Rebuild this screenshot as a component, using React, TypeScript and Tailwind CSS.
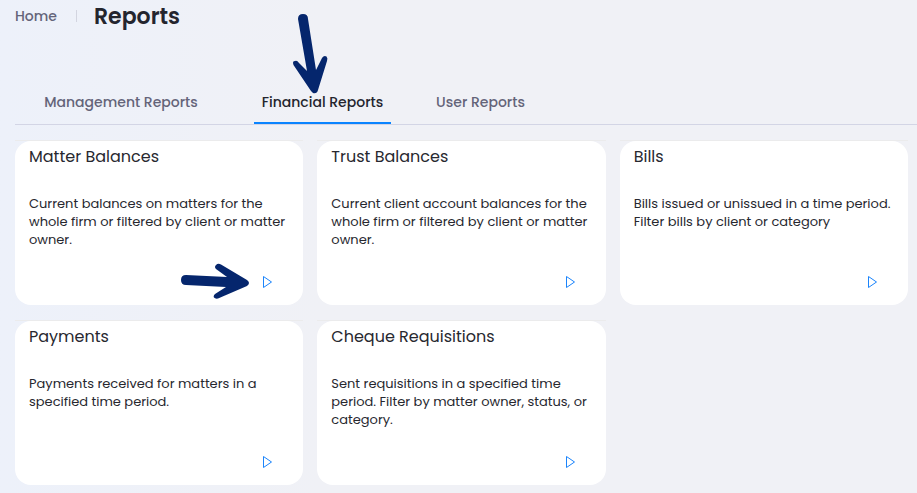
import React, { useState } from 'react';

type Report = {
  title: string;
  description: string;
  highlighted?: boolean;
};

const tabs = [
  { label: 'Management Reports', width: 'w-[166px]' },
  { label: 'Financial Reports', width: 'w-[137px]', highlighted: true },
  { label: 'User Reports', width: 'w-[107px]' },
];

const reports: Report[] = [
  {
    title: 'Matter Balances',
    description: 'Current balances on matters for the whole firm or filtered by client or matter owner.',
    highlighted: true,
  },
  {
    title: 'Trust Balances',
    description: 'Current client account balances for the whole firm or filtered by client or matter owner.',
  },
  {
    title: 'Bills',
    description: 'Bills issued or unissued in a time period. Filter bills by client or category',
  },
  {
    title: 'Payments',
    description: 'Payments received for matters in a specified time period.',
  },
  {
    title: 'Cheque Requisitions',
    description: 'Sent requisitions in a specified time period. Filter by matter owner, status, or category.',
  },
];

const DownArrow = () => (
  <svg
    className="pointer-events-none absolute bottom-[30px] left-[38px]"
    width="36"
    height="82"
    viewBox="0 0 36 82"
    fill="#05266d"
    aria-hidden="true"
  >
    <path d="M6 7 Q6 2 11 2 Q16 2 16 7 L24 58 L30 46 Q32 43 34.500 44.500 Q36 46 35 49 L26 78 Q25 82 21 81 L19 79 L1.500 53 Q0 49 3 49 Q5 48 7 51 L15 59 Z" />
  </svg>
);

// Pointer beside the run button
const RightArrow = () => (
  <svg
    className="pointer-events-none absolute right-[53px] bottom-[6px]"
    width="70"
    height="36"
    viewBox="0 0 70 36"
    fill="#05266d"
    aria-hidden="true"
  >
    <path d="M6 12 L47 14 L36 6 Q34 4 36 2 Q38 0 41 1.500 L67 17 Q71 20 67 23 L38 35.500 Q35 36 34 34.500 Q33 33 35 31 L46 24 L6 22 Q1 22 1 17 Q1 12 6 12 Z" />
  </svg>
);

const ReportCard = ({ title, description, highlighted }: Report) => (
  <div className="border-t border-[#ebebec]">
    <section className="relative flex min-h-[164px] flex-col rounded-2xl bg-white pr-2 pb-4 pl-[14px] text-[#27282f]">
      <h2 className="pt-1 text-base leading-6">{title}</h2>
      <p className="mt-[26px] text-[13px] leading-[18px]">{description}</p>
      <button type="button" aria-label={`Run ${title}`} className="mt-auto mr-[22px] cursor-pointer self-end">
        <svg width="11" height="14" viewBox="0 0 11 14" fill="none" stroke="#1b84fb" aria-hidden="true">
          <path d="M1.500 1.500 L9.500 7 L1.500 12.500 Z" />
        </svg>
      </button>
      {highlighted && <RightArrow />}
    </section>
  </div>
);

const ReportsPage = () => {
  const [activeTab, setActiveTab] = useState('Financial Reports');

  return (
    <div className="min-h-screen bg-[#f0f1f6] bg-linear-to-r from-[#edf1fa] via-[#f0f1f6] via-35% to-[#f0f1f6] pb-2 pl-[15px] font-['Poppins','Inter',sans-serif]">
      <header className="flex h-8 items-center">
        <a href="#" className="text-sm font-medium text-[#646479]">Home</a>
        <span className="mr-[17px] ml-[19px] h-3 w-px bg-[#d3d5e0]" />
        <h1 className="text-[22px] font-semibold text-[#24252e]">Reports</h1>
      </header>

      <nav className="mt-[46px] flex h-[47px] border-b border-[#d3d5e5] pl-[23px]">
        {tabs.map((tab, index) => (
          <div key={tab.label} className={`relative ${tab.width} ${index > 0 ? (index === 1 ? 'ml-[50px]' : 'ml-9') : ''}`}>
            <button
              type="button"
              onClick={() => setActiveTab(tab.label)}
              className={`h-full w-full cursor-pointer border-b-2 pt-1 text-sm font-medium whitespace-nowrap ${
                activeTab === tab.label ? 'border-[#0a84ff] text-[#24252e]' : 'border-transparent text-[#646479]'
              }`}
            >
              {tab.label}
            </button>
            {tab.highlighted && <DownArrow />}
          </div>
        ))}
      </nav>

      <main className="mt-[15px] mr-[9px] grid grid-cols-3 gap-x-[14px] gap-y-[15px]">
        {reports.map((report) => (
          <ReportCard key={report.title} {...report} />
        ))}
      </main>
    </div>
  );
};

export default ReportsPage;
